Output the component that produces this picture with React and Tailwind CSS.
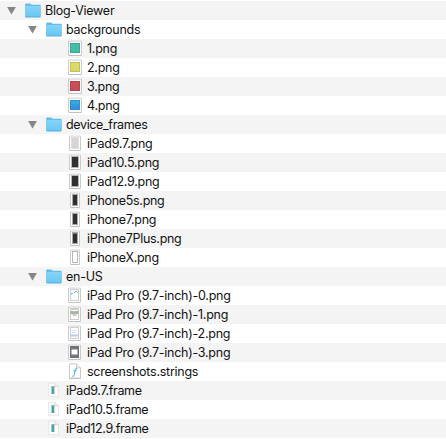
import React from "react";

const icon = "block h-[19px] w-4 shrink-0";

function Folder() {
  return (
    <svg className={icon} viewBox="0 0 16 19">
      <defs>
        <linearGradient id="folder" x1="0" y1="0" x2="0" y2="1">
          <stop offset="0" stopColor="#83d3f9" />
          <stop offset="1" stopColor="#69c7f4" />
        </linearGradient>
      </defs>
      <path d="M.2 3.6Q.2 2.6 1.2 2.6H5.2L6.6 3.8H14.8Q15.7 3.8 15.7 4.7V15.4Q15.7 16.2 14.8 16.2H1.2Q.2 16.2 .2 15.4Z" fill="#62bde7" />
      <path d="M.5 5.6H15.4V15.5H.5Z" fill="url(#folder)" />
      <path d="M.4 5.5H15.5" stroke="#98ddfb" strokeWidth=".6" />
      <path d="M.4 16H15.5" stroke="#56add3" strokeWidth=".7" />
    </svg>
  );
}

function Sheet({ x = 1.5, w = 13, children }) {
  return (
    <svg className={icon} viewBox="0 0 16 19">
      <rect x={x - 0.4} y="1.6" width={w + 0.8} height="15.4" rx="1" fill="#dadada" />
      <rect x={x} y="2" width={w} height="14.7" rx=".6" fill="#b9b9b9" />
      <rect x={x + 0.5} y="2.4" width={w - 1} height="13.6" fill="#fff" />
      {children}
    </svg>
  );
}

function Swatch({ from, to, edge }) {
  const id = "swatch" + from.slice(1);
  return (
    <Sheet>
      <defs>
        <linearGradient id={id} x1="0" y1="0" x2="0" y2="1">
          <stop offset="0" stopColor={from} />
          <stop offset="1" stopColor={to} />
        </linearGradient>
      </defs>
      <rect x="3.5" y="4.5" width="9" height="9" fill={`url(#${id})`} stroke={edge} strokeWidth="1" />
    </Sheet>
  );
}

function Tablet({ light }) {
  return (
    <Sheet x={2.5} w={11}>
      <rect x="4.5" y="3.5" width="7" height="11" fill={light ? "#f2f0ee" : "#aaa"} stroke={light ? "#dfdddc" : "#b5b5b5"} strokeWidth="1" />
      <rect x="5" y="4" width="6" height="10" fill={light ? "#d8d4d1" : "#303030"} />
    </Sheet>
  );
}

function Phone({ plus, outline }) {
  return (
    <Sheet x={3.5} w={9}>
      <rect x="5.5" y="3.5" width="5" height="11" fill={outline ? "#fff" : "#777"} stroke={outline ? "#b8b8b8" : "#a8a8a8"} strokeWidth="1" />
      {!outline && <rect x="6" y={plus ? 5 : 4} width="4" height={plus ? 9 : 10} fill="#303030" />}
    </Sheet>
  );
}

function Shot({ n }) {
  return (
    <Sheet x={1.5} w={12}>
      <rect x="3.5" y="3.5" width="8" height="11" fill={n === 3 ? "#75777c" : "#fbfcfc"} stroke={n === 3 ? "#6c6e73" : "#cccecf"} strokeWidth="1" />
      {n === 0 && <g><path d="M4 7.5H6M8 5.5H10M7 6.5H8" stroke="#6dc9e8" /><path d="M4 8.5H5M10 6.5H11" stroke="#a9dcea" /></g>}
      {n === 1 && <g><path d="M4 4.5H11" stroke="#c9d2c8" /><path d="M3.5 7.5H11.5" stroke="#a5b5a7" strokeWidth="3" /><path d="M6 6.5H9M6 10.5H9" stroke="#dfb69b" /><path d="M5 9.5H10" stroke="#d4d9d4" /></g>}
      {n === 2 && <g><path d="M5 6.5H10M5 8.5H9" stroke="#dce3fa" /><path d="M4 11.5H11" stroke="#b9cbf5" strokeWidth="2" /></g>}
      {n === 3 && <rect x="4.5" y="6.5" width="6" height="5" fill="#fff" />}
    </Sheet>
  );
}

function Strings() {
  return (
    <svg className={icon} viewBox="0 0 16 19">
      <path d="M2.5 1.8H9.5L13.5 5.8V16H2.5Z" fill="#fff" stroke="#cacaca" />
      <path d="M2 16.6H14" stroke="#aaa" strokeWidth=".6" />
      <path d="M9.5 1.8V5.8H13.5" fill="#eee" stroke="#c6c6c6" strokeWidth=".8" />
      <path d="M10.2 6.4Q8.7 6 8.3 8L7.1 13.2Q6.7 14.7 5.4 14M6.3 8.7H9.7" fill="none" stroke="#55b5ec" strokeWidth="1.1" />
    </svg>
  );
}

function Frame() {
  return (
    <svg className={icon} viewBox="0 0 16 19">
      <path d="M2.5 2.2H9L12.5 5.7V15.6H2.5Z" fill="#fcfcfc" stroke="#e2e2e2" strokeWidth=".8" />
      <path d="M9 2.2V5.7H12.5" fill="#eee" stroke="#d6d6d6" strokeWidth=".7" />
      <rect x="6" y="6" width="2" height="7" fill="#46a5a1" />
      <path d="M5.5 5V13" stroke="#9ccfcb" />
      <path d="M6 5.5H9" stroke="#a9b5b7" />
      <path d="M8.5 6V13" stroke="#d3dcdc" />
    </svg>
  );
}

const rows = [
  ["Blog-Viewer", 0, <Folder />, true],
  ["backgrounds", 1, <Folder />, true],
  ["1.png", 2, <Swatch from="#45bfae" to="#45b9a7" edge="#3ca595" />],
  ["2.png", 2, <Swatch from="#dddc69" to="#d8d863" edge="#c0c056" />],
  ["3.png", 2, <Swatch from="#cb5057" to="#c84b53" edge="#b3454b" />],
  ["4.png", 2, <Swatch from="#31b4e5" to="#3b82d9" edge="#3190c9" />],
  ["device_frames", 1, <Folder />, true],
  ["iPad9.7.png", 2, <Tablet light />],
  ["iPad10.5.png", 2, <Tablet />],
  ["iPad12.9.png", 2, <Tablet />],
  ["iPhone5s.png", 2, <Phone />],
  ["iPhone7.png", 2, <Phone />],
  ["iPhone7Plus.png", 2, <Phone plus />],
  ["iPhoneX.png", 2, <Phone outline />],
  ["en-US", 1, <Folder />, true],
  ["iPad Pro (9.7-inch)-0.png", 2, <Shot n={0} />],
  ["iPad Pro (9.7-inch)-1.png", 2, <Shot n={1} />],
  ["iPad Pro (9.7-inch)-2.png", 2, <Shot n={2} />],
  ["iPad Pro (9.7-inch)-3.png", 2, <Shot n={3} />],
  ["screenshots.strings", 2, <Strings />],
  ["iPad9.7.frame", 1, <Frame />],
  ["iPad10.5.frame", 1, <Frame />],
  ["iPad12.9.frame", 1, <Frame />],
];

const indent = ["pl-[7px]", "pl-[28px]", "pl-[49px]"];

function tracking(name) {
  if (name.includes("frame")) return "tracking-[-0.36px]";
  if (name.startsWith("iPhone")) return "tracking-[-0.3px]";
  return "tracking-[-0.26px]";
}

export default function App() {
  return (
    <div className="h-[439px] w-[446px] overflow-hidden bg-white pt-px font-['Inter','Liberation_Sans',sans-serif] text-[12.5px] text-[#111111]">
      {rows.map(([name, level, glyph, open]) => (
        <div key={name} className={`flex h-[19px] items-center odd:bg-[#f4f4f4] ${indent[level]}`}>
          <svg className="mr-[9px] block h-[19px] w-[9px] shrink-0" viewBox="0 0 9 19">
            {open && <path d="M.1 6H8.9L4.5 13.4Z" fill="#868686" />}
          </svg>
          {glyph}
          <span className={`ml-1 whitespace-nowrap leading-[19px] ${tracking(name)}`}>{name}</span>
        </div>
      ))}
    </div>
  );
}
